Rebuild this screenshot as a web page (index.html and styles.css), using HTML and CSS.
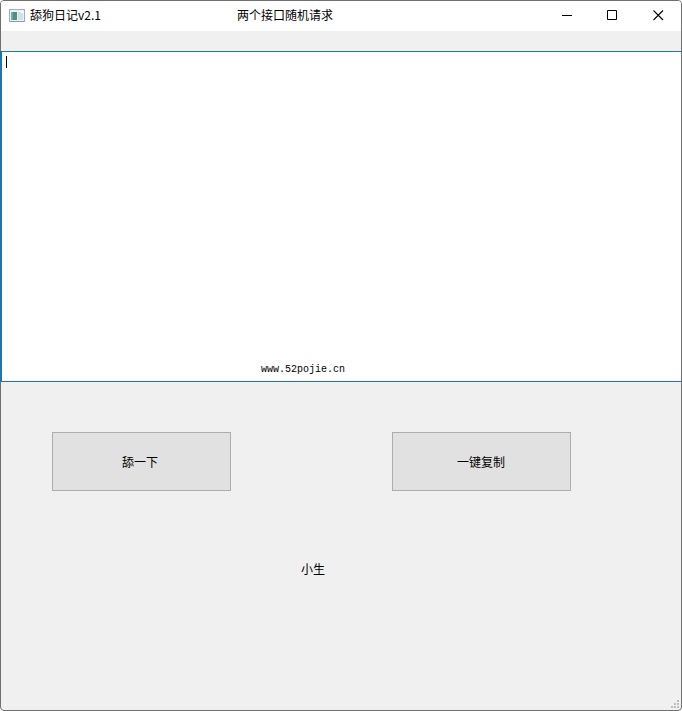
FILE: index.html
```
<!DOCTYPE html>
<html lang="zh-CN">
<head>
<meta charset="utf-8">
<title>舔狗日记v2.1</title>
<link rel="stylesheet" href="styles.css">
</head>
<body>
<main class="window">
  <header class="titlebar">
    <svg class="app-icon" width="16" height="14" viewBox="0 0 16 14" shape-rendering="crispEdges">
      <rect x=".5" y=".5" width="15" height="12" fill="#edf1f4" stroke="#a5adb3"/>
      <rect x="2" y="3" width="6" height="8" fill="#4c9186"/>
      <rect x="2" y="3" width="2" height="8" fill="#74a9a8"/>
      <rect x="9" y="3" width="5" height="8" fill="#d3dfe9"/>
      <rect x="12" y="2" width="2" height="2" fill="#fff"/>
      <path d="M1 12.5h14" stroke="#929ca1"/>
    </svg>
    <span class="app-name">舔狗日记v2.1</span>
    <span class="subtitle">两个接口随机请求</span>
    <div class="controls">
      <span class="control"><svg width="11" height="11"><path d="M0 5.5h10" stroke="#000"/></svg></span>
      <span class="control"><svg width="11" height="11"><path d="M.5 .5h9v9h-9z" fill="none" stroke="#000"/></svg></span>
      <span class="control"><svg width="11" height="11"><path d="M.5 .5l9.5 9.5M10 .5L.5 10" stroke="#000" stroke-width="1.1"/></svg></span>
    </div>
  </header>
  <section class="editor">
    <span class="caret"></span>
    <span class="site">www.52pojie.cn</span>
  </section>
  <div class="actions">
    <button class="action" type="button">舔一下</button>
    <button class="action copy" type="button">一键复制</button>
  </div>
  <p class="author">小生</p>
  <footer class="statusbar">
    <svg width="10" height="10" fill="#bdbdbd" shape-rendering="crispEdges">
      <path d="M6 0h2v2h-2zM3 3h2v2h-2zM6 3h2v2h-2zM0 6h2v2h-2zM3 6h2v2h-2zM6 6h2v2h-2z"/>
    </svg>
  </footer>
</main>
</body>
</html>
```
FILE: styles.css
```
* { box-sizing: border-box; }

body {
  margin: 0;
  background: #fff;
  color: #000;
  font: 12px/16px "Noto Sans CJK SC", sans-serif;
}

.window {
  display: flex;
  flex-direction: column;
  width: 682px;
  height: 711px;
  border: 1px solid #707070;
  border-radius: 4px;
  background: #f0f0f0;
}

.titlebar {
  display: flex;
  align-items: center;
  height: 30px;
  padding: 0 0 1px 8px;
  border-radius: 3px 3px 0 0;
  background: #fff;
}

.app-icon { margin-right: 5px; }

.app-name { width: 207px; }

.app-name,
.subtitle {
  padding-bottom: 1px;
  white-space: nowrap;
}

.controls {
  display: flex;
  margin-left: auto;
}

.control {
  display: flex;
  align-items: center;
  justify-content: center;
  width: 45.5px;
  height: 29px;
}

.editor {
  display: flex;
  flex-direction: column;
  justify-content: space-between;
  height: 331px;
  margin: 20px 0 0 -1px;
  padding: 4px 0 3px 4px;
  border: solid #1f76ab;
  border-width: 1px 0 1px 2px;
  background: #fff;
}

.caret {
  width: 1px;
  height: 12px;
  background: #000;
}

.site {
  margin-left: 255px;
  font: 10px/16px "Liberation Mono", monospace;
}

.actions {
  display: flex;
  gap: 161px;
  padding: 50px 0 0 51px;
}

.action {
  width: 179px;
  height: 59px;
  padding: 0 3px 0 0;
  border: 1px solid #adadad;
  background: #e1e1e1;
  color: #000;
  font: inherit;
}

.copy { padding-right: 1px; }

.author {
  margin: 70px 0 0 300px;
}

.statusbar {
  display: flex;
  justify-content: flex-end;
  margin-top: auto;
}
```
